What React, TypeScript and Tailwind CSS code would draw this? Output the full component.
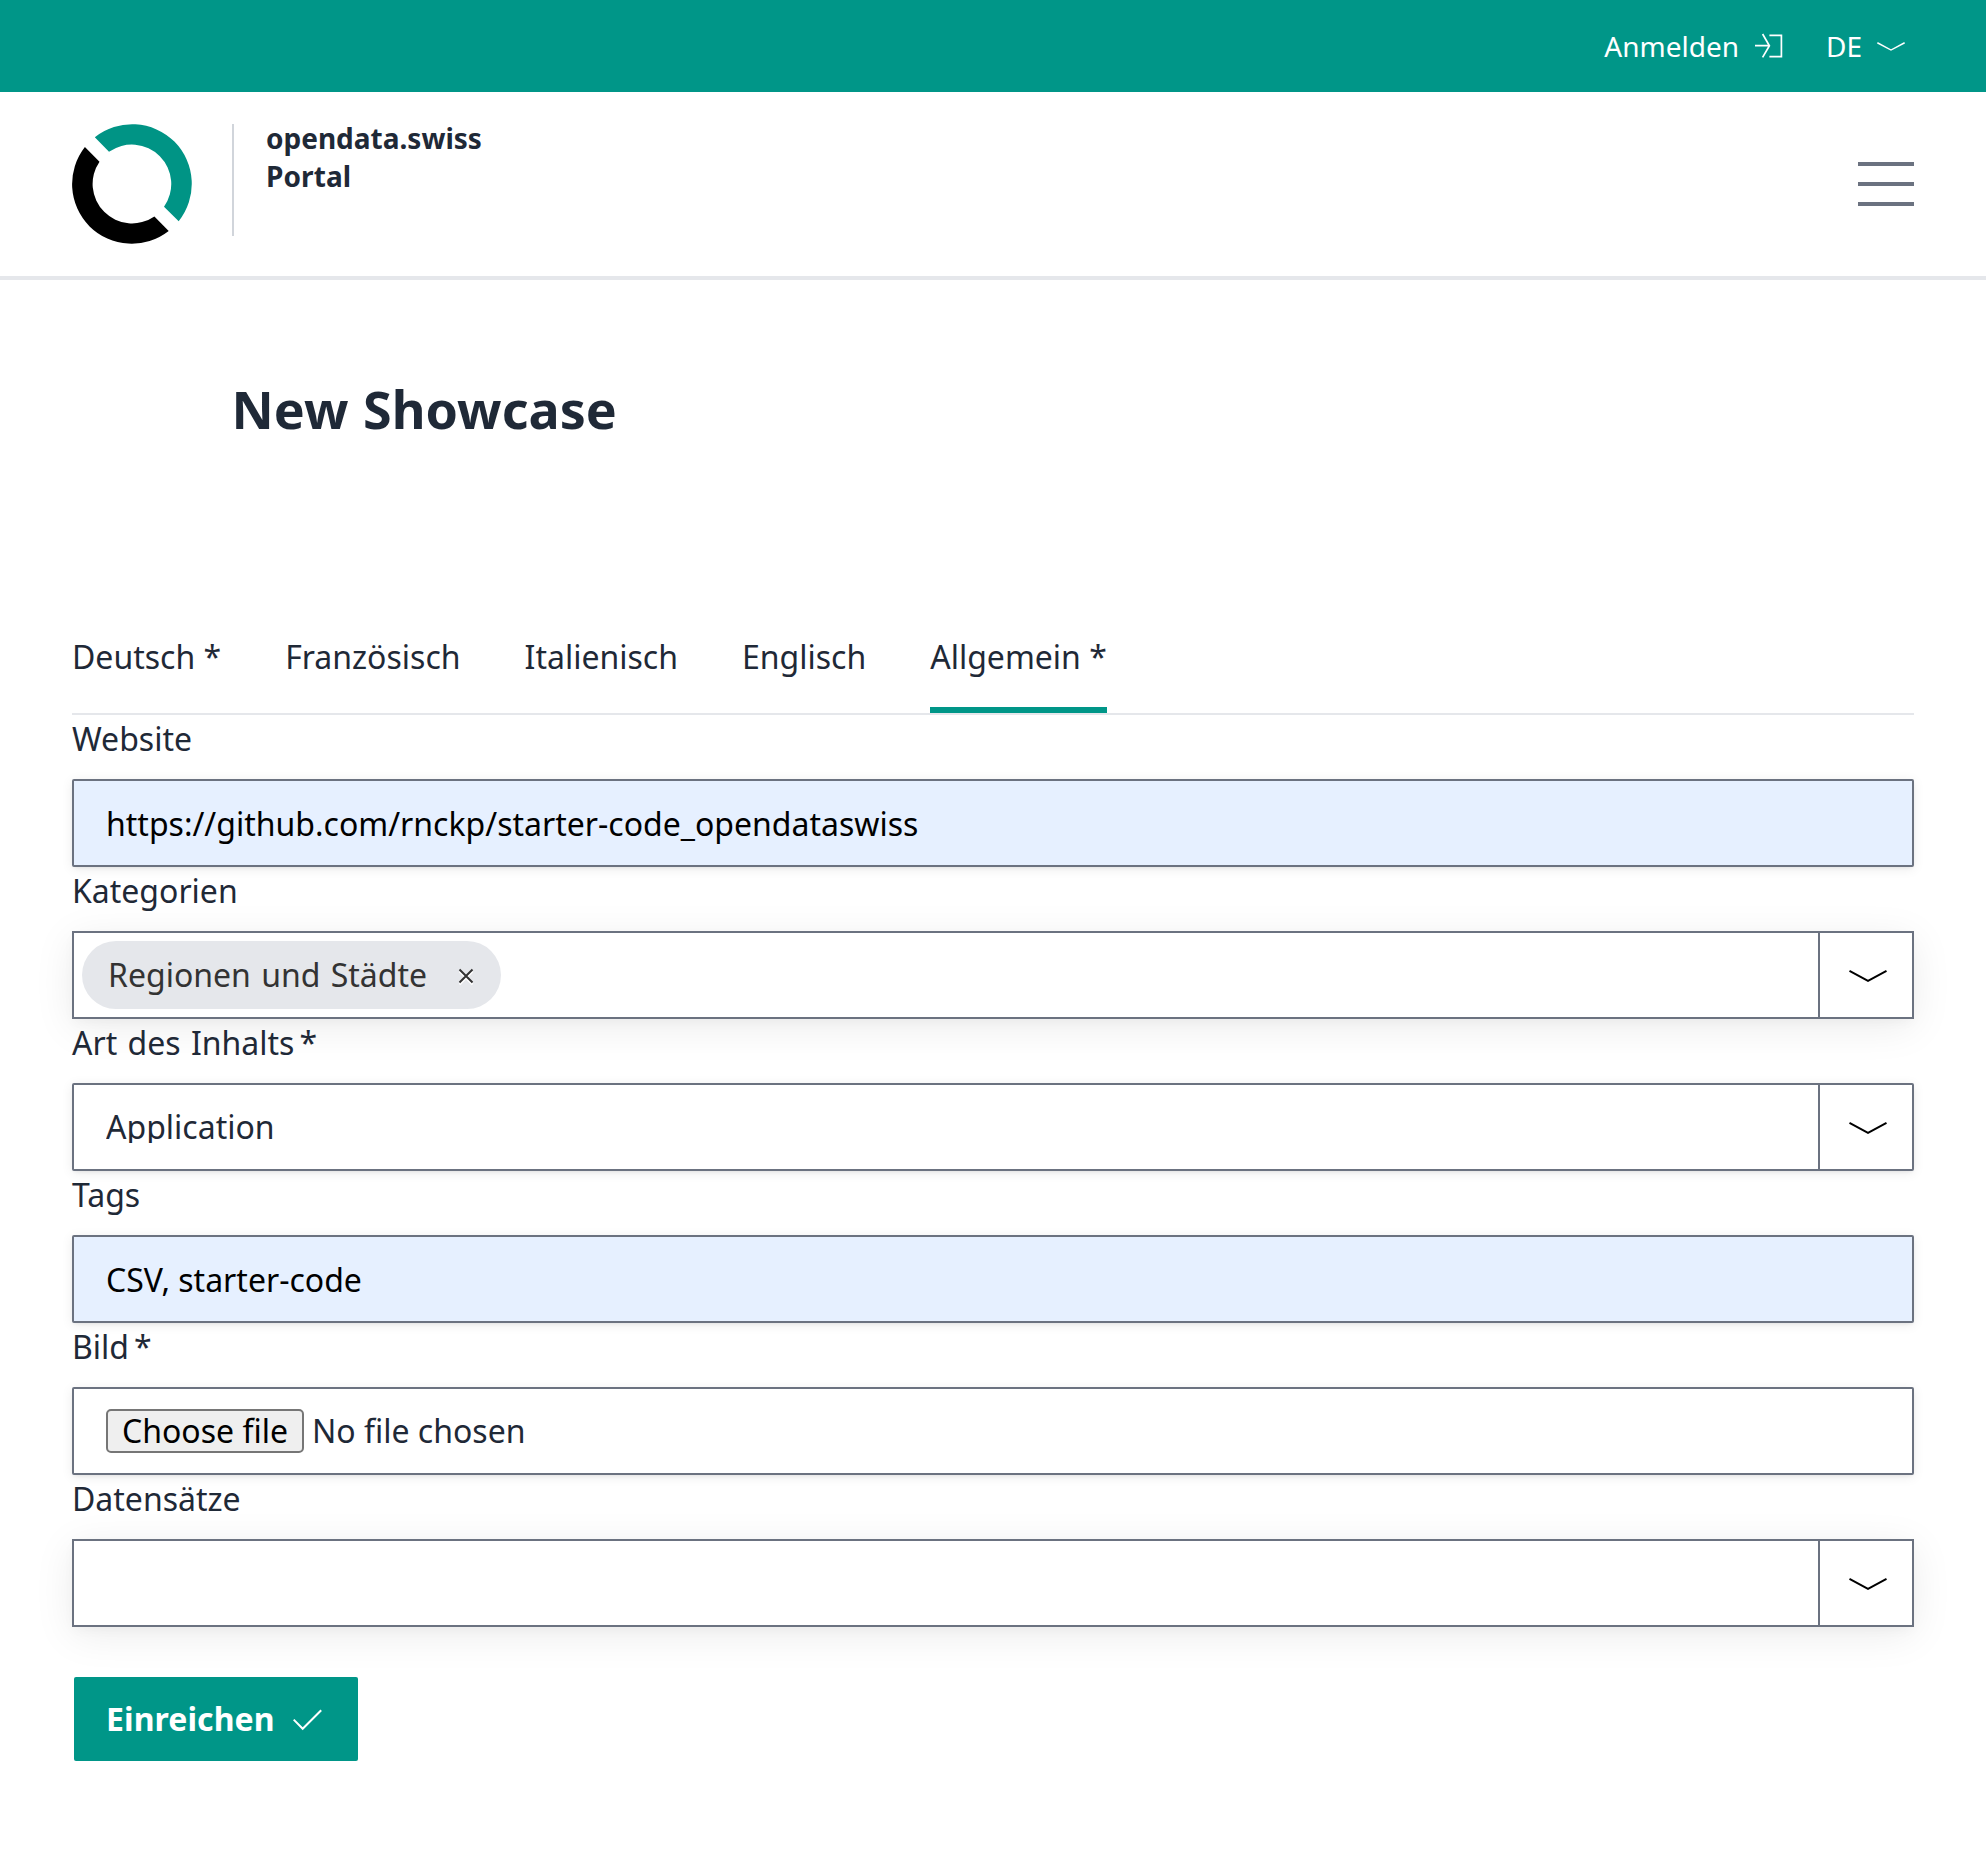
import type { ReactNode } from "react";

const tabs = ["Deutsch *", "Französisch", "Italienisch", "Englisch", "Allgemein *"];

const fieldBox = "h-[88px] w-full border-2 border-[#6b7280] flex";
const softShadow = "rounded-[2px] shadow-[0_2px_4px_-2px_rgba(0,0,0,0.1),0_2px_12px_rgba(0,0,0,0.08)]";
const deepShadow = "shadow-[0_4px_12px_-2px_rgba(0,0,0,0.04),0_8px_40px_rgba(0,0,0,0.08)]";

function Logo() {
  return (
    <svg className="h-[120px] w-[120px] shrink-0" viewBox="0 0 120 120">
      <path
        fill="#009485"
        d="M22.8 13.3A60 60 0 0 1 102.4 17.6A60 60 0 0 1 106.7 97.2L92 82.7A39.3 39.3 0 0 0 87.8 32.2A39.3 39.3 0 0 0 37 27.8Z"
      />
      <path
        fill="#000"
        d="M12.9 23A60 60 0 0 0 17.6 102.4A60 60 0 0 0 96.7 107L82.4 92.4A39.3 39.3 0 0 1 32.2 87.8A39.3 39.3 0 0 1 27.5 37.7Z"
      />
    </svg>
  );
}

function LoginIcon() {
  return (
    <svg className="h-7 w-7" viewBox="0 0 28 28" fill="none" stroke="currentColor" strokeWidth="1.7">
      <path d="M0 13.7H14.4M7.6 2L14.4 13.7L7.6 25.4M14.4 3.3H26.4V24.7H14.4" />
    </svg>
  );
}

function Chevron({ className }: { className: string }) {
  return (
    <svg className={className} viewBox="0 0 38 12" fill="none" stroke="currentColor" strokeWidth="2">
      <path d="M0.5 0.9L19 10.8L37.5 0.9" />
    </svg>
  );
}

function Field({ label, required, children }: { label: string; required?: boolean; children: ReactNode }) {
  return (
    <div>
      <div className="mb-4 flex h-12 leading-[48px]">
        <span className="[word-spacing:2px]">{label}</span>
        {required && <span className="ml-[5px]">*</span>}
      </div>
      {children}
    </div>
  );
}

function TextInput({ value }: { value: string }) {
  return (
    <div className={`${fieldBox} ${softShadow} items-center bg-[#e6f0ff] px-8 pt-0.5 leading-[48px] text-black`}>
      {value}
    </div>
  );
}

function SelectBox({ shadow, children }: { shadow: string; children?: ReactNode }) {
  return (
    <div className={`${fieldBox} ${shadow} bg-white`}>
      <div className="flex flex-1 items-center">{children}</div>
      <div className="flex w-[94px] items-center justify-center border-l-2 border-[#6b7280] pt-0.5 pl-1 text-black">
        <Chevron className="h-3 w-[38px]" />
      </div>
    </div>
  );
}

export default function App() {
  return (
    <div className="min-h-[1871px] bg-white font-['Noto_Sans','Open_Sans',sans-serif] text-[32px] text-[#1f2937]">
      <div className="flex h-[92px] items-center justify-end bg-[#009688] pr-[81px] text-[28px] text-white">
        <span className="pb-px">Anmelden</span>
        <span className="ml-4">
          <LoginIcon />
        </span>
        <span className="ml-[43px] pb-px">DE</span>
        <Chevron className="ml-[15px] h-[9px] w-7" />
      </div>

      <header className="flex h-[188px] items-start justify-between border-b-4 border-[#e5e7eb] px-[72px] pt-8">
        <div className="flex">
          <Logo />
          <div className="ml-10 h-28 border-l-2 border-[#d1d5db] pl-8 text-[28px] leading-[38px] font-bold">
            <div className="-mt-[5px]">opendata.swiss</div>
            <div className="tracking-[0.1px]">Portal</div>
          </div>
        </div>
        <div className="mt-[38px] flex w-14 flex-col gap-4">
          <div className="h-1 bg-[#6b7280]" />
          <div className="h-1 bg-[#6b7280]" />
          <div className="h-1 bg-[#6b7280]" />
        </div>
      </header>

      <h1 className="mt-[94px] ml-[231.5px] h-[70px] text-[52px] leading-[70px] font-bold tracking-[0.05px] [word-spacing:1px]">
        New Showcase
      </h1>

      <main className="px-[72px] pt-[189px]">
        <div className="flex h-[82px] gap-16 border-b-2 border-[#e5e7eb] leading-[48px]">
          {tabs.map((tab) => (
            <div
              key={tab}
              className={tab.startsWith("Allgemein") ? "h-20 border-b-[6px] border-[#009688]" : "h-20"}
            >
              {tab}
            </div>
          ))}
        </div>

        <Field label="Website">
          <TextInput value="https://github.com/rnckp/starter-code_opendataswiss" />
        </Field>
        <Field label="Kategorien">
          <SelectBox shadow={deepShadow}>
            <div className="ml-2 flex h-[68px] items-center rounded-full bg-[#e5e7eb] pr-7 pl-[26px] text-[#333]">
              <span className="[word-spacing:2px]">Regionen und Städte</span>
              <svg
                className="mt-0.5 ml-8 h-[14px] w-[14px] overflow-visible drop-shadow-[0_2px_0_#fff]"
                viewBox="0 0 14 14"
                fill="none"
                stroke="currentColor"
                strokeWidth="2"
              >
                <path d="M0.5 0.5L13.5 13.5M13.5 0.5L0.5 13.5" />
              </svg>
            </div>
          </SelectBox>
        </Field>
        <Field label="Art des Inhalts" required>
          <SelectBox shadow={softShadow}>
            <div className="ml-8 h-8 overflow-hidden leading-8">Application</div>
          </SelectBox>
        </Field>
        <Field label="Tags">
          <TextInput value="CSV, starter-code" />
        </Field>
        <Field label="Bild" required>
          <div className={`${fieldBox} ${softShadow} items-center bg-white px-8`}>
            <div className="flex h-11 items-center rounded-[5px] border-2 border-[#767676] bg-[#efefef] px-[14px] leading-10 text-black">
              Choose file
            </div>
            <span className="ml-2">No file chosen</span>
          </div>
        </Field>
        <Field label="Datensätze">
          <SelectBox shadow={deepShadow} />
        </Field>

        <button className="mt-[50px] ml-0.5 flex h-[84px] items-center rounded-[2px] bg-[#009688] pr-9 pl-8 font-bold text-white">
          <span className="tracking-[0.08px]">Einreichen</span>
          <svg className="mt-0.5 ml-[18px] h-[22px] w-[29px]" viewBox="0 0 29 22" fill="none" stroke="currentColor" strokeWidth="2">
            <path d="M0.7 10.6L9.7 19.8L28.2 1.2" />
          </svg>
        </button>
      </main>
    </div>
  );
}
